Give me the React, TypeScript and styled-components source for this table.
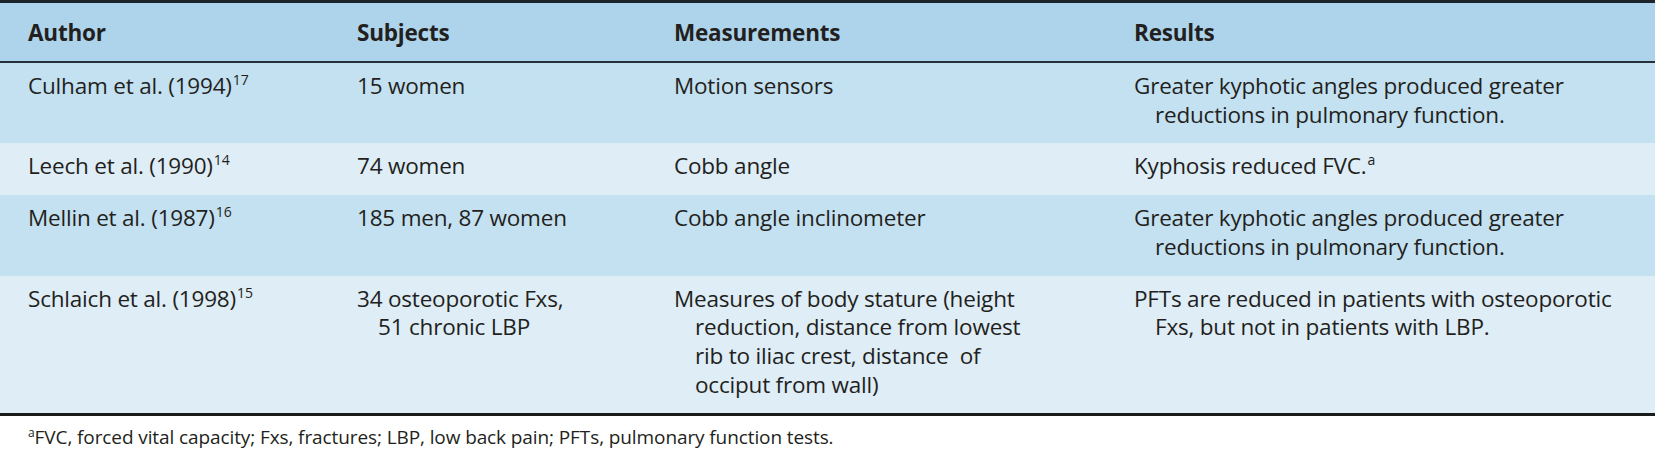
import React from "react";
import styled, { createGlobalStyle } from "styled-components";

const Global = createGlobalStyle`
  html, body { margin: 0; padding: 0; background: #ffffff; }
  body { font-family: "Open Sans", "Noto Sans", sans-serif; color: #231f20; }
`;

const Page = styled.div`
  width: 1655px;
`;

const Table = styled.table`
  width: 1655px;
  border-collapse: separate;
  border-spacing: 0;
  table-layout: fixed;
  border-top: 3px solid #1c2329;
  border-bottom: 3px solid #1b1b1b;
`;

const HeadRow = styled.tr`
  background: #add4ea;
`;

const Th = styled.th`
  height: 60px;
  padding: 0 0 0 28px;
  text-align: left;
  vertical-align: middle;
  font-size: 22.5px;
  font-weight: 700;
  line-height: 29px;
  box-sizing: border-box;
  letter-spacing: -0.2px;
  border-bottom: 2px solid #25323c;
`;

const Row = styled.tr<{ $shade: "dark" | "light" }>`
  background: ${(p) => (p.$shade === "dark" ? "#c3e1f1" : "#deedf6")};
`;

const Td = styled.td`
  padding: 9px 0 14px 49px;
  text-indent: -21px;
  vertical-align: top;
  font-size: 22.5px;
  line-height: 28.7px;
  text-align: left;
  white-space: nowrap;
  letter-spacing: -0.2px;
`;

const Sup = styled.sup`
  font-size: 14px;
  line-height: 0;
  vertical-align: 0;
  position: relative;
  top: -9px;
  margin-left: 1px;
  letter-spacing: 0;
`;

const Footnote = styled.p`
  margin: 0;
  padding: 8px 0 0 28px;
  font-size: 19px;
  line-height: 26px;
  letter-spacing: -0.1px;
`;

const FootSup = styled.sup`
  font-size: 12px;
  line-height: 0;
  vertical-align: 0;
  position: relative;
  top: -7px;
`;

type RowData = {
  author: string;
  ref: string;
  subjects: string[];
  measures: string[];
  results: string[];
  resultSup?: string;
  shade: "dark" | "light";
};

const rows: RowData[] = [
  {
    author: "Culham et al. (1994)",
    ref: "17",
    subjects: ["15 women"],
    measures: ["Motion sensors"],
    results: ["Greater kyphotic angles produced greater", "reductions in pulmonary function."],
    shade: "dark",
  },
  {
    author: "Leech et al. (1990)",
    ref: "14",
    subjects: ["74 women"],
    measures: ["Cobb angle"],
    results: ["Kyphosis reduced FVC."],
    resultSup: "a",
    shade: "light",
  },
  {
    author: "Mellin et al. (1987)",
    ref: "16",
    subjects: ["185 men, 87 women"],
    measures: ["Cobb angle inclinometer"],
    results: ["Greater kyphotic angles produced greater", "reductions in pulmonary function."],
    shade: "dark",
  },
  {
    author: "Schlaich et al. (1998)",
    ref: "15",
    subjects: ["34 osteoporotic Fxs,", "51 chronic LBP"],
    measures: [
      "Measures of body stature (height",
      "reduction, distance from lowest",
      "rib to iliac crest, distance\u00a0 of",
      "occiput from wall)",
    ],
    results: ["PFTs are reduced in patients with osteoporotic", "Fxs, but not in patients with LBP."],
    shade: "light",
  },
];

const Lines: React.FC<{ lines: string[]; sup?: string }> = ({ lines, sup }) => (
  <>
    {lines.map((l, i) => (
      <React.Fragment key={i}>
        {i > 0 && <br />}
        {l}
        {sup && i === lines.length - 1 && <Sup>{sup}</Sup>}
      </React.Fragment>
    ))}
  </>
);

export default function App() {
  return (
    <Page>
      <Global />
      <Table>
        <colgroup>
          <col style={{ width: 329 }} />
          <col style={{ width: 317 }} />
          <col style={{ width: 460 }} />
          <col style={{ width: 549 }} />
        </colgroup>
        <thead>
          <HeadRow>
            <Th>Author</Th>
            <Th>Subjects</Th>
            <Th>Measurements</Th>
            <Th>Results</Th>
          </HeadRow>
        </thead>
        <tbody>
          {rows.map((r) => (
            <Row key={r.author} $shade={r.shade}>
              <Td>
                {r.author}
                <Sup>{r.ref}</Sup>
              </Td>
              <Td>
                <Lines lines={r.subjects} />
              </Td>
              <Td>
                <Lines lines={r.measures} />
              </Td>
              <Td>
                <Lines lines={r.results} sup={r.resultSup} />
              </Td>
            </Row>
          ))}
        </tbody>
      </Table>
      <Footnote>
        <FootSup>a</FootSup>FVC, forced vital capacity; Fxs, fractures; LBP, low back pain; PFTs, pulmonary function tests.
      </Footnote>
    </Page>
  );
}
